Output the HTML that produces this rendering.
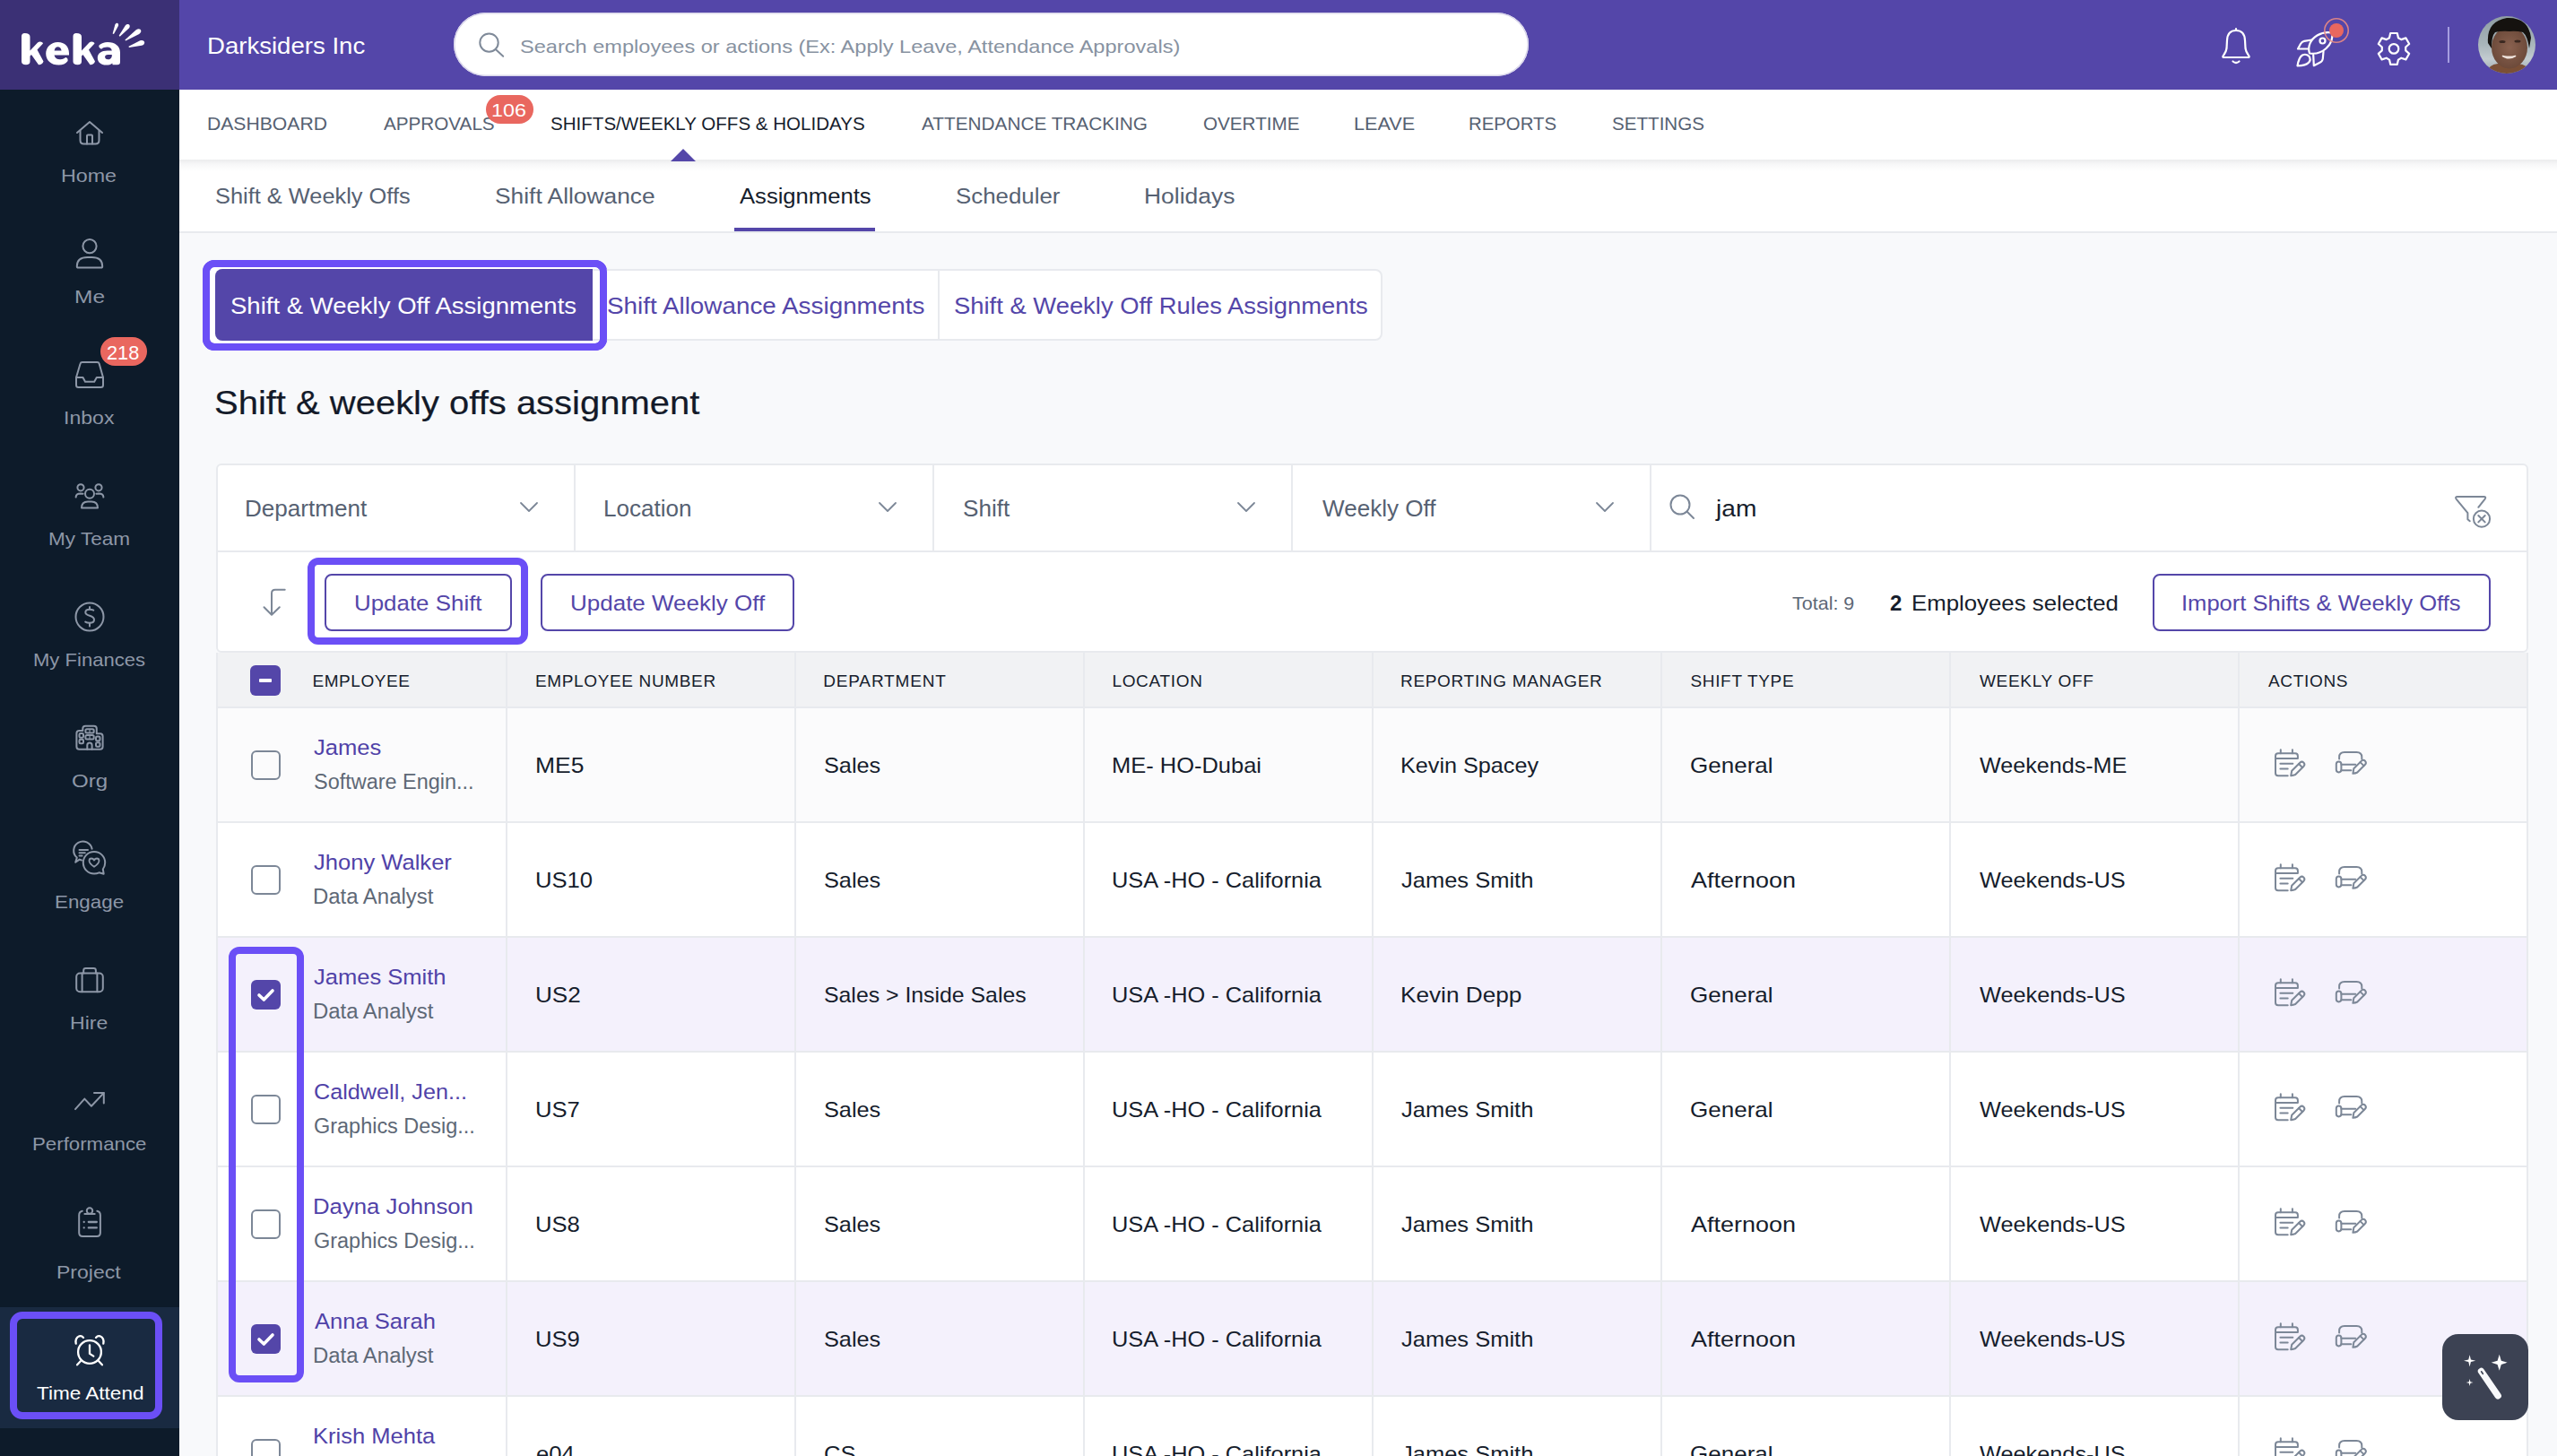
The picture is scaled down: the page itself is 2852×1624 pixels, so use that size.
<!DOCTYPE html>
<html><head><meta charset="utf-8"><title>Keka - Shift & weekly offs assignment</title>
<style>
html,body{margin:0;padding:0;}
body{width:2852px;height:1624px;overflow:hidden;position:relative;background:#f8f9fb;font-family:"Liberation Sans", sans-serif;}
.t{position:absolute;white-space:pre;line-height:1;transform-origin:0 0;}
svg{overflow:visible}
</style></head><body>
<div style="position:absolute;left:0px;top:0px;width:200px;height:1624px;background:#0d1b2a"></div>
<div style="position:absolute;left:200px;top:0px;width:2652px;height:100px;background:#5446a9"></div>
<div style="position:absolute;left:241px;top:517px;width:2579px;height:211px;background:#fff;border:2px solid #e8eaee;border-radius:6px;box-sizing:border-box"></div>
<div style="position:absolute;left:0px;top:0px;width:200px;height:100px;background:#3b3075"></div>
<div style="position:absolute;left:0px;top:1458px;width:200px;height:135px;background:#192a41"></div>
<div style="position:absolute;left:506px;top:14px;width:1199px;height:71px;background:#fff;border-radius:36px;box-shadow:inset 0 0 0 1.5px #d8d5ea"></div>
<div style="position:absolute;left:200px;top:178px;width:2652px;height:80px;background:#fff"></div>
<div style="position:absolute;left:200px;top:258px;width:2652px;height:2px;background:#e8eaee"></div>
<div style="position:absolute;left:226px;top:290px;width:451px;height:101px;border:8px solid #6b4ff6;border-radius:13px;box-sizing:border-box;background:#fff"></div>
<div style="position:absolute;left:240px;top:300px;width:1302px;height:80px;border:2px solid #e8eaee;border-radius:8px;box-sizing:border-box;background:#fff"></div>
<div style="position:absolute;left:241px;top:614px;width:2579px;height:2px;background:#e8eaee"></div>
<div style="position:absolute;left:640px;top:519px;width:2px;height:95px;background:#e8eaee"></div>
<div style="position:absolute;left:1040px;top:519px;width:2px;height:95px;background:#e8eaee"></div>
<div style="position:absolute;left:1440px;top:519px;width:2px;height:95px;background:#e8eaee"></div>
<div style="position:absolute;left:1840px;top:519px;width:2px;height:95px;background:#e8eaee"></div>
<div style="position:absolute;left:241px;top:728px;width:2579px;height:61px;background:#f1f2f4"></div>
<div style="position:absolute;left:241px;top:789px;width:2579px;height:128px;background:#fbfbfc"></div>
<div style="position:absolute;left:241px;top:917px;width:2579px;height:128px;background:#ffffff"></div>
<div style="position:absolute;left:241px;top:1045px;width:2579px;height:128px;background:#f4f1fc"></div>
<div style="position:absolute;left:241px;top:1173px;width:2579px;height:128px;background:#ffffff"></div>
<div style="position:absolute;left:241px;top:1301px;width:2579px;height:128px;background:#ffffff"></div>
<div style="position:absolute;left:241px;top:1429px;width:2579px;height:128px;background:#f4f1fc"></div>
<div style="position:absolute;left:241px;top:1557px;width:2579px;height:128px;background:#ffffff"></div>
<svg style="position:absolute;left:0px;top:0px" width="200" height="100" viewBox="0 0 200 100">
<g fill="#fff">
<path d="M24 40.5 Q24 37 27.5 37 Q33.5 37 33.5 41 L33.5 56.5 L42 47.5 Q44.5 45.5 47.5 47.5 L48 48.5 L41.5 55.5 L48.5 68.5 Q47 72.5 43 72.3 L35 61 L33.5 62.5 L33.5 68.5 Q33.5 72.3 29 72.3 Q24 72.3 24 68.5 Z"/>
<path d="M64.5 47 C72.5 47 77 52 77 59.5 L77 61.5 L60.5 61.5 C61.5 65 64 66.5 67.5 66.3 C70 66.2 72 65 73.2 64 Q76 64.5 75.6 68 C73.5 71 70 72.6 65.5 72.6 C57 72.6 51.2 67.5 51.2 59.8 C51.2 52.5 57 47 64.5 47 Z M60.6 56.5 L68.6 56.5 C68.2 53.8 66.5 52.3 64.5 52.3 C62.5 52.3 61 53.8 60.6 56.5 Z"/>
<path d="M81.5 40.5 Q81.5 37 85 37 Q91 37 91 41 L91 56.5 L99.5 47.5 Q102 45.5 105 47.5 L105.5 48.5 L99 55.5 L106 68.5 Q104.5 72.5 100.5 72.3 L92.5 61 L91 62.5 L91 68.5 Q91 72.3 86.5 72.3 Q81.5 72.3 81.5 68.5 Z"/>
<path d="M120 47 C128.5 47 134 51.5 134 58.5 L134 69 Q134 72.3 131 72.3 L125.6 72.3 L125.3 70.4 C123.5 71.9 121.3 72.6 118.4 72.6 C112.6 72.6 108.8 69.3 108.8 64.5 C108.8 59.5 113 56.4 119.8 56.4 L124.8 56.4 C124.4 54 122.6 52.6 119.6 52.6 C116.8 52.6 114.6 53.5 113 54.8 Q109.5 53 110.5 50.5 C113 48.2 116.2 47 120 47 Z M120.3 61 C118.2 61 117.1 62 117.1 63.6 C117.1 65.2 118.3 66.3 120.4 66.3 C122.8 66.3 124.7 64.8 124.8 62.4 L124.8 61 Z"/>
<path d="M126.95 38.06 L131.86 28.97 C133.20 25.61 129.67 24.21 128.33 27.56 L125.65 37.54 Z"/>
<path d="M133.73 40.65 L143.59 31.82 C146.66 28.20 142.85 24.97 139.78 28.59 L132.67 39.75 Z"/>
<path d="M140.20 45.58 L155.16 37.93 C159.69 34.81 156.40 30.03 151.87 33.16 L139.40 44.42 Z"/>
<path d="M143.91 53.07 L158.03 50.85 C163.27 49.16 161.50 43.64 156.25 45.33 L143.49 51.73 Z"/>
</g></svg>
<div style="position:absolute;left:2730px;top:30px;width:2px;height:40px;background:#a59de0"></div>
<svg style="position:absolute;left:2764px;top:18px" width="64" height="64" viewBox="0 0 64 64"><defs><clipPath id="av"><circle cx="32" cy="32" r="32"/></clipPath>
<linearGradient id="avbg" x1="0" y1="0" x2="0" y2="1"><stop offset="0" stop-color="#8e9ca3"/><stop offset="0.5" stop-color="#a9b6bb"/><stop offset="0.75" stop-color="#c3ccd0"/><stop offset="1" stop-color="#9aa6ab"/></linearGradient>
<radialGradient id="face" cx="0.5" cy="0.5" r="0.55"><stop offset="0" stop-color="#8a6250"/><stop offset="1" stop-color="#6a4838"/></radialGradient></defs>
<g clip-path="url(#av)"><rect width="64" height="64" fill="url(#avbg)"/>
<path d="M8 64 Q12 54 22 53 L44 53 Q56 54 60 64 Z" fill="#7a4f36"/>
<ellipse cx="35" cy="35" rx="20" ry="23.5" fill="url(#face)"/>
<path d="M11 30 Q9 6 32 2 Q56 1 59 24 L57 36 Q55 22 50 18 Q42 16 35 17 Q26 16 19 18 Q15 22 15 36 Z" fill="#15120f"/>
<ellipse cx="27" cy="28.5" rx="3.5" ry="1.5" fill="#3a2820"/><ellipse cx="44" cy="28" rx="3.5" ry="1.5" fill="#3a2820"/>
<path d="M27.5 44.5 Q34.5 49 41.5 44.5 Q34.5 46.3 27.5 44.5 Z" fill="#efe3dc" stroke="#efe3dc" stroke-width="1.6" stroke-linejoin="round"/></g></svg>
<div style="position:absolute;left:200px;top:100px;width:2652px;height:78px;background:#fff"></div>
<div style="position:absolute;left:200px;top:178px;width:2652px;height:13px;background:linear-gradient(rgba(30,35,50,0.085),rgba(30,35,50,0.03) 45%,rgba(30,35,50,0))"></div>
<div style="position:absolute;left:240px;top:300px;width:421px;height:80px;background:#5446a9;border-radius:8px 0 0 8px"></div>
<div style="position:absolute;left:1046px;top:302px;width:2px;height:76px;background:#e8eaee"></div>
<div style="position:absolute;left:362px;top:640px;width:209px;height:64px;border:2px solid #5446a9;border-radius:8px;box-sizing:border-box;background:#fff"></div>
<div style="position:absolute;left:603px;top:640px;width:283px;height:64px;border:2px solid #5446a9;border-radius:8px;box-sizing:border-box;background:#fff"></div>
<div style="position:absolute;left:2401px;top:640px;width:377px;height:64px;border:2px solid #5446a9;border-radius:8px;box-sizing:border-box;background:#fff"></div>
<div style="position:absolute;left:279px;top:742px;width:34px;height:34px;background:#5446a9;border-radius:6px"></div>
<div style="position:absolute;left:241px;top:916px;width:2579px;height:2px;background:#e8eaee"></div>
<div style="position:absolute;left:241px;top:1044px;width:2579px;height:2px;background:#e8eaee"></div>
<div style="position:absolute;left:241px;top:1172px;width:2579px;height:2px;background:#e8eaee"></div>
<div style="position:absolute;left:241px;top:1300px;width:2579px;height:2px;background:#e8eaee"></div>
<div style="position:absolute;left:241px;top:1428px;width:2579px;height:2px;background:#e8eaee"></div>
<div style="position:absolute;left:241px;top:1556px;width:2579px;height:2px;background:#e8eaee"></div>
<div style="position:absolute;left:241px;top:1684px;width:2579px;height:2px;background:#e8eaee"></div>
<div style="position:absolute;left:564px;top:728px;width:2px;height:1000px;background:#e8eaee"></div>
<div style="position:absolute;left:886px;top:728px;width:2px;height:1000px;background:#e8eaee"></div>
<div style="position:absolute;left:1208px;top:728px;width:2px;height:1000px;background:#e8eaee"></div>
<div style="position:absolute;left:1530px;top:728px;width:2px;height:1000px;background:#e8eaee"></div>
<div style="position:absolute;left:1852px;top:728px;width:2px;height:1000px;background:#e8eaee"></div>
<div style="position:absolute;left:2174px;top:728px;width:2px;height:1000px;background:#e8eaee"></div>
<div style="position:absolute;left:2496px;top:728px;width:2px;height:1000px;background:#e8eaee"></div>
<div style="position:absolute;left:241px;top:788px;width:2579px;height:2px;background:#e8eaee"></div>
<div style="position:absolute;left:241px;top:728px;width:2px;height:1000px;background:#e8eaee"></div>
<div style="position:absolute;left:2818px;top:728px;width:2px;height:1000px;background:#e8eaee"></div>
<div style="position:absolute;left:11px;top:1463px;width:170px;height:120px;border:8px solid #6b4ff6;border-radius:14px;box-sizing:border-box"></div>
<div style="position:absolute;left:819px;top:254px;width:157px;height:4px;background:#5446a9"></div>
<div style="position:absolute;left:226px;top:290px;width:451px;height:101px;border:8px solid #6b4ff6;border-radius:13px;box-sizing:border-box"></div>
<div style="position:absolute;left:343px;top:622px;width:246px;height:97px;border:8px solid #6b4ff6;border-radius:12px;box-sizing:border-box"></div>
<div style="position:absolute;left:289px;top:757px;width:14px;height:4px;background:#fff;border-radius:1px"></div>
<div style="position:absolute;left:280px;top:837px;width:33px;height:33px;border:2.5px solid #7c8797;border-radius:6px;box-sizing:border-box"></div>
<div style="position:absolute;left:280px;top:965px;width:33px;height:33px;border:2.5px solid #7c8797;border-radius:6px;box-sizing:border-box"></div>
<div style="position:absolute;left:280px;top:1093px;width:33px;height:33px;background:#5446a9;border-radius:6px"></div>
<div style="position:absolute;left:280px;top:1221px;width:33px;height:33px;border:2.5px solid #7c8797;border-radius:6px;box-sizing:border-box"></div>
<div style="position:absolute;left:280px;top:1349px;width:33px;height:33px;border:2.5px solid #7c8797;border-radius:6px;box-sizing:border-box"></div>
<div style="position:absolute;left:280px;top:1477px;width:33px;height:33px;background:#5446a9;border-radius:6px"></div>
<div style="position:absolute;left:280px;top:1605px;width:33px;height:33px;border:2.5px solid #7c8797;border-radius:6px;box-sizing:border-box"></div>
<div style="position:absolute;left:112px;top:376px;width:52px;height:32px;background:#e9675f;border-radius:16px"></div>
<svg style="position:absolute;left:280px;top:1093px" width="33" height="33" viewBox="0 0 33 33"><path d="M9 17 L14.3 22 L24 12" fill="none" stroke="#fff" stroke-width="3.6" stroke-linecap="round" stroke-linejoin="round"/></svg>
<svg style="position:absolute;left:280px;top:1477px" width="33" height="33" viewBox="0 0 33 33"><path d="M9 17 L14.3 22 L24 12" fill="none" stroke="#fff" stroke-width="3.6" stroke-linecap="round" stroke-linejoin="round"/></svg>
<div class="t" style="left:68.4px;top:185px;font-size:21px;color:#8d97a7;transform:scaleX(1.1075);">Home</div>
<div class="t" style="left:82.5px;top:320px;font-size:21px;color:#8d97a7;transform:scaleX(1.1654);">Me</div>
<div class="t" style="left:70.9px;top:455px;font-size:21px;color:#8d97a7;transform:scaleX(1.098);">Inbox</div>
<div class="t" style="left:54.4px;top:590px;font-size:21px;color:#8d97a7;transform:scaleX(1.0741);">My Team</div>
<div class="t" style="left:37.0px;top:725px;font-size:21px;color:#8d97a7;transform:scaleX(1.05);">My Finances</div>
<div class="t" style="left:80.0px;top:860px;font-size:21px;color:#8d97a7;transform:scaleX(1.1455);">Org</div>
<div class="t" style="left:60.6px;top:995px;font-size:21px;color:#8d97a7;transform:scaleX(1.0657);">Engage</div>
<div class="t" style="left:78.1px;top:1130px;font-size:21px;color:#8d97a7;transform:scaleX(1.0972);">Hire</div>
<div class="t" style="left:35.9px;top:1265px;font-size:21px;color:#8d97a7;transform:scaleX(1.0598);">Performance</div>
<div class="t" style="left:63.3px;top:1408px;font-size:21px;color:#8d97a7;transform:scaleX(1.0952);">Project</div>
<div class="t" style="left:41.0px;top:1543px;font-size:21px;color:#ffffff;transform:scaleX(1.0736);">Time Attend</div>
<div class="t" style="left:230.7px;top:38px;font-size:26px;color:#ffffff;transform:scaleX(1.0604);">Darksiders Inc</div>
<div class="t" style="left:579.9px;top:41px;font-size:21px;color:#8792a1;transform:scaleX(1.1223);">Search employees or actions (Ex: Apply Leave, Attendance Approvals)</div>
<div class="t" style="left:230.8px;top:127px;font-size:21px;color:#566172;transform:scaleX(1.0069);">DASHBOARD</div>
<div class="t" style="left:428.0px;top:127px;font-size:21px;color:#566172;transform:scaleX(0.984);">APPROVALS</div>
<div class="t" style="left:614.3px;top:127px;font-size:21px;color:#161d2c;transform:scaleX(0.9789);">SHIFTS/WEEKLY OFFS &amp; HOLIDAYS</div>
<div class="t" style="left:1028.0px;top:127px;font-size:21px;color:#566172;transform:scaleX(0.9893);">ATTENDANCE TRACKING</div>
<div class="t" style="left:1341.6px;top:127px;font-size:21px;color:#566172;transform:scaleX(0.9832);">OVERTIME</div>
<div class="t" style="left:1509.5px;top:127px;font-size:21px;color:#566172;transform:scaleX(1.0317);">LEAVE</div>
<div class="t" style="left:1638.1px;top:127px;font-size:21px;color:#566172;transform:scaleX(0.9694);">REPORTS</div>
<div class="t" style="left:1798.0px;top:127px;font-size:21px;color:#566172;transform:scaleX(0.9806);">SETTINGS</div>
<div class="t" style="left:239.9px;top:208px;font-size:23.5px;color:#566172;transform:scaleX(1.08);">Shift &amp; Weekly Offs</div>
<div class="t" style="left:551.9px;top:208px;font-size:23.5px;color:#566172;transform:scaleX(1.121);">Shift Allowance</div>
<div class="t" style="left:824.8px;top:208px;font-size:23.5px;color:#161d2c;transform:scaleX(1.0896);">Assignments</div>
<div class="t" style="left:1065.8px;top:208px;font-size:23.5px;color:#566172;transform:scaleX(1.1);">Scheduler</div>
<div class="t" style="left:1276.2px;top:208px;font-size:23.5px;color:#566172;transform:scaleX(1.1253);">Holidays</div>
<div class="t" style="left:257.4px;top:329px;font-size:25.5px;color:#ffffff;transform:scaleX(1.0795);">Shift &amp; Weekly Off Assignments</div>
<div class="t" style="left:676.9px;top:329px;font-size:25.5px;color:#5446a9;transform:scaleX(1.092);">Shift Allowance Assignments</div>
<div class="t" style="left:1063.9px;top:329px;font-size:25.5px;color:#5446a9;transform:scaleX(1.0741);">Shift &amp; Weekly Off Rules Assignments</div>
<div class="t" style="left:239.1px;top:432px;font-size:36.5px;color:#131a29;transform:scaleX(1.0949);-webkit-text-stroke:0.2px #131a29;">Shift &amp; weekly offs assignment</div>
<div class="t" style="left:273.3px;top:555px;font-size:25px;color:#566172;transform:scaleX(1.0434);">Department</div>
<div class="t" style="left:672.9px;top:555px;font-size:25px;color:#566172;transform:scaleX(1.0434);">Location</div>
<div class="t" style="left:1074.0px;top:555px;font-size:25px;color:#566172;transform:scaleX(1.0434);">Shift</div>
<div class="t" style="left:1474.7px;top:555px;font-size:25px;color:#566172;transform:scaleX(1.0434);">Weekly Off</div>
<div class="t" style="left:1914.1px;top:555px;font-size:25px;color:#161d2c;transform:scaleX(1.125);">jam</div>
<div class="t" style="left:394.9px;top:661px;font-size:24.5px;color:#5446a9;transform:scaleX(1.0571);">Update Shift</div>
<div class="t" style="left:635.9px;top:661px;font-size:24.5px;color:#5446a9;transform:scaleX(1.0611);">Update Weekly Off</div>
<div class="t" style="left:1999.4px;top:662px;font-size:21px;color:#5d6776;transform:scaleX(1.0239);">Total: 9</div>
<div class="t" style="left:2108px;top:661px;font-size:24px;color:#161d2c;font-weight:700;">2</div>
<div class="t" style="left:2131.5px;top:661px;font-size:24px;color:#161d2c;transform:scaleX(1.0749);">Employees selected</div>
<div class="t" style="left:2432.9px;top:661px;font-size:24.5px;color:#5446a9;transform:scaleX(1.0432);">Import Shifts &amp; Weekly Offs</div>
<div class="t" style="left:348.5px;top:750px;font-size:19px;color:#161d2c;letter-spacing:0.56px;">EMPLOYEE</div>
<div class="t" style="left:597px;top:750px;font-size:19px;color:#161d2c;letter-spacing:0.64px;">EMPLOYEE NUMBER</div>
<div class="t" style="left:918.2px;top:750px;font-size:19px;color:#161d2c;letter-spacing:0.84px;">DEPARTMENT</div>
<div class="t" style="left:1240.4px;top:750px;font-size:19px;color:#161d2c;letter-spacing:0.68px;">LOCATION</div>
<div class="t" style="left:1562px;top:750px;font-size:19px;color:#161d2c;letter-spacing:0.68px;">REPORTING MANAGER</div>
<div class="t" style="left:1885.4px;top:750px;font-size:19px;color:#161d2c;letter-spacing:0.68px;">SHIFT TYPE</div>
<div class="t" style="left:2208px;top:750px;font-size:19px;color:#161d2c;letter-spacing:0.68px;">WEEKLY OFF</div>
<div class="t" style="left:2530px;top:750px;font-size:19px;color:#161d2c;letter-spacing:0.68px;">ACTIONS</div>
<div class="t" style="left:349.8px;top:822px;font-size:24.5px;color:#5042a8;transform:scaleX(1.0443);">James</div>
<div class="t" style="left:349.8px;top:861px;font-size:23px;color:#5e6876;transform:scaleX(1.0198);">Software Engin...</div>
<div class="t" style="left:596.8px;top:842px;font-size:24px;color:#161d2c;transform:scaleX(1.1022);">ME5</div>
<div class="t" style="left:919.1px;top:842px;font-size:24px;color:#161d2c;transform:scaleX(1.0534);">Sales</div>
<div class="t" style="left:1240.3px;top:842px;font-size:24px;color:#161d2c;transform:scaleX(1.061);">ME- HO-Dubai</div>
<div class="t" style="left:1562.3px;top:842px;font-size:24px;color:#161d2c;transform:scaleX(1.0497);">Kevin Spacey</div>
<div class="t" style="left:1885.1px;top:842px;font-size:24px;color:#161d2c;transform:scaleX(1.0843);">General</div>
<div class="t" style="left:2208.0px;top:842px;font-size:24px;color:#161d2c;transform:scaleX(1.0468);">Weekends-ME</div>
<div class="t" style="left:349.8px;top:950px;font-size:24.5px;color:#5042a8;transform:scaleX(1.0432);">Jhony Walker</div>
<div class="t" style="left:348.7px;top:989px;font-size:23px;color:#5e6876;transform:scaleX(1.0402);">Data Analyst</div>
<div class="t" style="left:596.9px;top:970px;font-size:24px;color:#161d2c;transform:scaleX(1.0674);">US10</div>
<div class="t" style="left:919.1px;top:970px;font-size:24px;color:#161d2c;transform:scaleX(1.0534);">Sales</div>
<div class="t" style="left:1240.3px;top:970px;font-size:24px;color:#161d2c;transform:scaleX(1.0566);">USA -HO - California</div>
<div class="t" style="left:1563.3px;top:970px;font-size:24px;color:#161d2c;transform:scaleX(1.0625);">James Smith</div>
<div class="t" style="left:1886.2px;top:970px;font-size:24px;color:#161d2c;transform:scaleX(1.1233);">Afternoon</div>
<div class="t" style="left:2208.0px;top:970px;font-size:24px;color:#161d2c;transform:scaleX(1.0542);">Weekends-US</div>
<div class="t" style="left:349.8px;top:1078px;font-size:24.5px;color:#5042a8;transform:scaleX(1.042);">James Smith</div>
<div class="t" style="left:348.7px;top:1117px;font-size:23px;color:#5e6876;transform:scaleX(1.0402);">Data Analyst</div>
<div class="t" style="left:596.8px;top:1098px;font-size:24px;color:#161d2c;transform:scaleX(1.0886);">US2</div>
<div class="t" style="left:919.2px;top:1098px;font-size:24px;color:#161d2c;transform:scaleX(1.0343);">Sales &gt; Inside Sales</div>
<div class="t" style="left:1240.3px;top:1098px;font-size:24px;color:#161d2c;transform:scaleX(1.0566);">USA -HO - California</div>
<div class="t" style="left:1562.2px;top:1098px;font-size:24px;color:#161d2c;transform:scaleX(1.0909);">Kevin Depp</div>
<div class="t" style="left:1885.1px;top:1098px;font-size:24px;color:#161d2c;transform:scaleX(1.0843);">General</div>
<div class="t" style="left:2208.0px;top:1098px;font-size:24px;color:#161d2c;transform:scaleX(1.0542);">Weekends-US</div>
<div class="t" style="left:349.8px;top:1206px;font-size:24.5px;color:#5042a8;transform:scaleX(1.0294);">Caldwell, Jen...</div>
<div class="t" style="left:349.8px;top:1245px;font-size:23px;color:#5e6876;transform:scaleX(1.0197);">Graphics Desig...</div>
<div class="t" style="left:596.9px;top:1226px;font-size:24px;color:#161d2c;transform:scaleX(1.0674);">US7</div>
<div class="t" style="left:919.1px;top:1226px;font-size:24px;color:#161d2c;transform:scaleX(1.0534);">Sales</div>
<div class="t" style="left:1240.3px;top:1226px;font-size:24px;color:#161d2c;transform:scaleX(1.0566);">USA -HO - California</div>
<div class="t" style="left:1563.3px;top:1226px;font-size:24px;color:#161d2c;transform:scaleX(1.0625);">James Smith</div>
<div class="t" style="left:1885.1px;top:1226px;font-size:24px;color:#161d2c;transform:scaleX(1.0843);">General</div>
<div class="t" style="left:2208.0px;top:1226px;font-size:24px;color:#161d2c;transform:scaleX(1.0542);">Weekends-US</div>
<div class="t" style="left:348.7px;top:1334px;font-size:24.5px;color:#5042a8;transform:scaleX(1.0509);">Dayna Johnson</div>
<div class="t" style="left:349.8px;top:1373px;font-size:23px;color:#5e6876;transform:scaleX(1.0197);">Graphics Desig...</div>
<div class="t" style="left:596.9px;top:1354px;font-size:24px;color:#161d2c;transform:scaleX(1.0674);">US8</div>
<div class="t" style="left:919.1px;top:1354px;font-size:24px;color:#161d2c;transform:scaleX(1.0534);">Sales</div>
<div class="t" style="left:1240.3px;top:1354px;font-size:24px;color:#161d2c;transform:scaleX(1.0566);">USA -HO - California</div>
<div class="t" style="left:1563.3px;top:1354px;font-size:24px;color:#161d2c;transform:scaleX(1.0625);">James Smith</div>
<div class="t" style="left:1886.2px;top:1354px;font-size:24px;color:#161d2c;transform:scaleX(1.1233);">Afternoon</div>
<div class="t" style="left:2208.0px;top:1354px;font-size:24px;color:#161d2c;transform:scaleX(1.0542);">Weekends-US</div>
<div class="t" style="left:350.8px;top:1462px;font-size:24.5px;color:#5042a8;transform:scaleX(1.042);">Anna Sarah</div>
<div class="t" style="left:348.7px;top:1501px;font-size:23px;color:#5e6876;transform:scaleX(1.0402);">Data Analyst</div>
<div class="t" style="left:596.9px;top:1482px;font-size:24px;color:#161d2c;transform:scaleX(1.0674);">US9</div>
<div class="t" style="left:919.1px;top:1482px;font-size:24px;color:#161d2c;transform:scaleX(1.0534);">Sales</div>
<div class="t" style="left:1240.3px;top:1482px;font-size:24px;color:#161d2c;transform:scaleX(1.0566);">USA -HO - California</div>
<div class="t" style="left:1563.3px;top:1482px;font-size:24px;color:#161d2c;transform:scaleX(1.0625);">James Smith</div>
<div class="t" style="left:1886.2px;top:1482px;font-size:24px;color:#161d2c;transform:scaleX(1.1233);">Afternoon</div>
<div class="t" style="left:2208.0px;top:1482px;font-size:24px;color:#161d2c;transform:scaleX(1.0542);">Weekends-US</div>
<div class="t" style="left:348.7px;top:1590px;font-size:24.5px;color:#5042a8;transform:scaleX(1.042);">Krish Mehta</div>
<div class="t" style="left:349.8px;top:1629px;font-size:23px;color:#5e6876;transform:scaleX(1.03);">Sales Executive</div>
<div class="t" style="left:597.9px;top:1610px;font-size:24px;color:#161d2c;transform:scaleX(1.0674);">e04</div>
<div class="t" style="left:919.1px;top:1610px;font-size:24px;color:#161d2c;transform:scaleX(1.0674);">CS</div>
<div class="t" style="left:1240.3px;top:1610px;font-size:24px;color:#161d2c;transform:scaleX(1.0566);">USA -HO - California</div>
<div class="t" style="left:1563.3px;top:1610px;font-size:24px;color:#161d2c;transform:scaleX(1.0625);">James Smith</div>
<div class="t" style="left:1885.1px;top:1610px;font-size:24px;color:#161d2c;transform:scaleX(1.0843);">General</div>
<div class="t" style="left:2208.0px;top:1610px;font-size:24px;color:#161d2c;transform:scaleX(1.0542);">Weekends-US</div>
<svg style="position:absolute;left:80px;top:130px" width="40" height="36" viewBox="0 0 40 36"><g fill="none" stroke="#8d97a7" stroke-width="2" stroke-linecap="round" stroke-linejoin="round"><path d="M6 18 L20 6 L34 18"/><path d="M9.5 15.5 L9.5 26.5 Q9.5 30.5 13.5 30.5 L26.5 30.5 Q30.5 30.5 30.5 26.5 L30.5 15.5"/><path d="M17 30.5 L17 21.5 Q17 20.5 18 20.5 L22 20.5 Q23 20.5 23 21.5 L23 30.5"/></g></svg>
<svg style="position:absolute;left:80px;top:262px" width="40" height="40" viewBox="0 0 40 40"><g fill="none" stroke="#8d97a7" stroke-width="2" stroke-linecap="round" stroke-linejoin="round"><circle cx="20" cy="12.6" r="7.6"/><path d="M5.8 35 Q5.8 25 17.5 25 L22.5 25 Q34.2 25 34.2 35 Q34.2 36.6 32.8 36.6 L7.2 36.6 Q5.8 36.6 5.8 35 Z"/></g></svg>
<svg style="position:absolute;left:80px;top:400px" width="40" height="40" viewBox="0 0 40 40"><g fill="none" stroke="#8d97a7" stroke-width="2" stroke-linecap="round" stroke-linejoin="round"><path d="M9.6 5.5 Q10 4 11.8 4 L28.4 4 Q30.2 4 30.6 5.5 L35 21 L35 29.5 Q35 32 32.5 32 L7.5 32 Q5 32 5 29.5 L5 21 Z"/><path d="M5 21 L12.5 21 L15 25.7 L25.2 25.7 L27.8 21 L35 21"/></g></svg>
<svg style="position:absolute;left:80px;top:535px" width="40" height="40" viewBox="0 0 40 40"><g fill="none" stroke="#8d97a7" stroke-width="2" stroke-linecap="round" stroke-linejoin="round"><circle cx="10" cy="8.8" r="3.6"/><circle cx="30" cy="8.8" r="3.6"/><circle cx="20" cy="15.8" r="5"/><path d="M11 31.5 Q11 24.5 18 24.5 L22 24.5 Q29 24.5 29 31.5 Z"/><path d="M4.6 19.6 Q4.8 15.6 9.6 15.6 L12.6 15.8"/><path d="M35.4 19.6 Q35.2 15.6 30.4 15.6 L27.4 15.8"/></g></svg>
<svg style="position:absolute;left:80px;top:668px" width="40" height="40" viewBox="0 0 40 40"><g fill="none" stroke="#8d97a7" stroke-width="2" stroke-linecap="round" stroke-linejoin="round"><circle cx="20" cy="20" r="15.5"/><path d="M24.3 12.6 Q22.6 11.7 20 11.7 Q15.3 11.7 15.3 15 Q15.3 17.4 20 18.8 Q25 20.3 25 23.3 Q25 26.8 20 26.8 Q17 26.8 15.2 25.6"/><path d="M20 9 L20 11.5 M20 27 L20 30.5"/></g></svg>
<svg style="position:absolute;left:80px;top:805px" width="40" height="40" viewBox="0 0 40 40"><g fill="none" stroke="#8d97a7" stroke-width="2" stroke-linecap="round" stroke-linejoin="round"><path d="M5.4 13 Q5.4 10 8.4 10 L12.3 10 L12.3 7.7 Q12.3 4.7 15.3 4.7 L24.8 4.7 Q27.8 4.7 27.8 7.7 L27.8 13.3 L31.6 13.3 Q34.6 13.3 34.6 16.3 L34.6 27.8 Q34.6 30.8 31.6 30.8 L8.4 30.8 Q5.4 30.8 5.4 27.8 Z"/><rect x="15.4" y="8.3" width="9.3" height="4.3" rx="1.5"/><rect x="15.4" y="15" width="9.3" height="4.5" rx="1.5"/><path d="M20.05 8.5 L20.05 12.4 M20.05 15.2 L20.05 19.3" stroke-width="1.2"/><rect x="8.5" y="13.1" width="4.5" height="4.7" rx="1.3"/><rect x="8.5" y="19.8" width="4.5" height="4.5" rx="1.3"/><rect x="27" y="16.4" width="4.5" height="4.8" rx="1.3"/><rect x="27" y="23.3" width="4.5" height="4.4" rx="1.3"/><path d="M17.3 30.8 L17.3 26.3 Q17.3 23.6 20 23.6 Q22.6 23.6 22.6 26.3 L22.6 30.8"/></g></svg>
<svg style="position:absolute;left:80px;top:935px" width="40" height="45" viewBox="0 0 40 45"><g fill="none" stroke="#8d97a7" stroke-width="2" stroke-linecap="round" stroke-linejoin="round"><path d="M22.6 11.8 A10.3 10.3 0 1 0 5.8 21.6 L4.2 26.8 L8.7 23.6 L11 24.5"/><path d="M8.5 12.9 L18 12.9 M8.5 16.3 L14.8 16.3 M8.5 19.6 L11.6 19.6"/><path d="M30.5 38.3 Q28 39.5 25 39.5 C18 39.5 12.8 34 12.8 27.3 C12.8 20.5 18 15.1 25 15.1 C32 15.1 37.2 20.5 37.2 27.3 C37.2 30 36.3 32.5 34.8 34.5 L35.7 39.7 Z"/><path d="M25 31.8 C21.5 29.5 19.5 27 19.5 25 C19.5 23.3 20.6 22.5 22 22.5 C23.4 22.5 24.4 23.3 25 24.5 C25.6 23.3 26.6 22.5 28 22.5 C29.4 22.5 30.5 23.3 30.5 25 C30.5 27 28.5 29.5 25 31.8 Z" stroke-width="1.8"/></g></svg>
<svg style="position:absolute;left:80px;top:1075px" width="40" height="40" viewBox="0 0 40 40"><g fill="none" stroke="#8d97a7" stroke-width="2" stroke-linecap="round" stroke-linejoin="round"><rect x="5.2" y="10.6" width="29.6" height="20.6" rx="4"/><path d="M11.6 10.6 L11.6 31.2 M28.4 10.6 L28.4 31.2"/><path d="M13.2 10.6 L13.2 7.5 Q13.2 5.1 15.6 5.1 L24.5 5.1 Q26.9 5.1 26.9 7.5 L26.9 10.6"/></g></svg>
<svg style="position:absolute;left:80px;top:1215px" width="40" height="30" viewBox="0 0 40 30"><g fill="none" stroke="#8d97a7" stroke-width="2" stroke-linecap="round" stroke-linejoin="round"><path d="M4 22.1 L14.3 10.6 L21.9 18.7 L35.7 4.1"/><path d="M25 3.9 L35.8 3.9 L35.8 15.4"/></g></svg>
<svg style="position:absolute;left:80px;top:1343px" width="40" height="40" viewBox="0 0 40 40"><g fill="none" stroke="#8d97a7" stroke-width="2" stroke-linecap="round" stroke-linejoin="round"><path d="M11.8 7.8 Q8.2 8.5 8.2 12.3 L8.2 32 Q8.2 36 12.2 36 L27.9 36 Q31.9 36 31.9 32 L31.9 12.3 Q31.9 8.5 28.3 7.8"/><circle cx="20" cy="7.5" r="3.2"/><path d="M14.4 10.9 L25.7 10.9"/><path d="M13.7 20 L13.7 20 M18.8 20 L27.8 20 M13.7 26.4 L13.7 26.4 M18.8 26.4 L27.8 26.4" stroke-width="2.3"/></g></svg>
<svg style="position:absolute;left:80px;top:1485px" width="40" height="40" viewBox="0 0 40 40"><g fill="none" stroke="#fff" stroke-width="2.3" stroke-linecap="round" stroke-linejoin="round"><circle cx="20" cy="23" r="12.9"/><path d="M20 15.3 L20 24.9 L24.3 27.6"/><path d="M4.7 13.6 Q3.5 7.5 8.5 5.3 Q11 4.5 13 6.9"/><path d="M35.3 13.6 Q36.5 7.5 31.5 5.3 Q29 4.5 27 6.9"/><path d="M9.8 33.3 L6.1 37.3 M30.2 33.3 L33.9 37.3"/></g></svg>
<svg style="position:absolute;left:530px;top:32px" width="36" height="36" viewBox="0 0 36 36"><g fill="none" stroke="#7f8a99" stroke-width="2" stroke-linecap="round"><circle cx="15.5" cy="15.6" r="10.2"/><path d="M23 23.2 L31.2 30.8"/></g></svg>
<svg style="position:absolute;left:2470px;top:28px" width="48" height="48" viewBox="0 0 48 48"><g fill="none" stroke="#fff" stroke-width="2.2" stroke-linecap="round" stroke-linejoin="round"><path d="M24 4 L24 6"/><path d="M24 6 Q14.5 6 14 17 L13.5 26 Q13 29.5 10.5 33 L9.5 34.5 Q8.8 36 10.5 36 L37.5 36 Q39.2 36 38.5 34.5 L37.5 33 Q35 29.5 34.5 26 L34 17 Q33.5 6 24 6 Z"/><path d="M20.5 40.5 Q24 43.5 27.5 40.5"/></g></svg>
<svg style="position:absolute;left:2555px;top:26px" width="60" height="52" viewBox="0 0 60 52"><g fill="none" stroke="#fff" stroke-width="2.2" stroke-linecap="round" stroke-linejoin="round"><path d="M21 33.5 C18.5 26 22 18 29.5 13.5 C35 10.2 41 9.5 46 10.5 C47 15.5 45.5 22.5 39.5 28 C34.5 32.5 28 34.5 21 33.5 Z"/><circle cx="35.5" cy="19.5" r="3"/><path d="M23.5 18.5 L15 19.8 Q12.5 20.3 11 23 L8 28.5 L19.8 28.5"/><path d="M36.5 31.5 L35.8 39.5 Q35.5 42.3 32.5 43.8 L25.8 47.2 L25.2 35.2"/><path d="M20.5 36.8 Q17 33.5 13 35.5 Q9 38 7.5 47.5 Q17 47.2 20 43.8 Q23 40.5 20.5 36.8 Z"/></g></svg>
<svg style="position:absolute;left:2648px;top:32px" width="44" height="44" viewBox="0 0 44 44"><g fill="none" stroke="#fff" stroke-width="2.2" stroke-linecap="round" stroke-linejoin="round"><path d="M18.2 5 L25.8 5 L27 10.2 L30.3 12.1 L35.4 10.4 L39.2 17 L35.2 20.5 L35.2 24.3 L39.2 27.8 L35.4 34.4 L30.3 32.7 L27 34.6 L25.8 39.8 L18.2 39.8 L17 34.6 L13.7 32.7 L8.6 34.4 L4.8 27.8 L8.8 24.3 L8.8 20.5 L4.8 17 L8.6 10.4 L13.7 12.1 L17 10.2 Z"/><circle cx="22" cy="22.4" r="5.3"/></g></svg>
<div style="position:absolute;left:542px;top:106px;width:53px;height:32px;background:#e9675f;border-radius:16px"></div>
<svg style="position:absolute;left:748px;top:165px" width="28" height="15" viewBox="0 0 28 15"><path d="M0 15 L14 1 L28 15 Z" fill="#5446a9"/></svg>
<svg style="position:absolute;left:579px;top:558px" width="24" height="16" viewBox="0 0 24 16"><path d="M2 3 L11 12 L20 3" fill="none" stroke="#7c8797" stroke-width="1.8" stroke-linecap="round" stroke-linejoin="round"/></svg>
<svg style="position:absolute;left:979px;top:558px" width="24" height="16" viewBox="0 0 24 16"><path d="M2 3 L11 12 L20 3" fill="none" stroke="#7c8797" stroke-width="1.8" stroke-linecap="round" stroke-linejoin="round"/></svg>
<svg style="position:absolute;left:1379px;top:558px" width="24" height="16" viewBox="0 0 24 16"><path d="M2 3 L11 12 L20 3" fill="none" stroke="#7c8797" stroke-width="1.8" stroke-linecap="round" stroke-linejoin="round"/></svg>
<svg style="position:absolute;left:1779px;top:558px" width="24" height="16" viewBox="0 0 24 16"><path d="M2 3 L11 12 L20 3" fill="none" stroke="#7c8797" stroke-width="1.8" stroke-linecap="round" stroke-linejoin="round"/></svg>
<svg style="position:absolute;left:1858px;top:548px" width="36" height="36" viewBox="0 0 36 36"><g fill="none" stroke="#7c8797" stroke-width="2" stroke-linecap="round"><circle cx="16" cy="15" r="10.5"/><path d="M23.5 22.5 L31 30"/></g></svg>
<svg style="position:absolute;left:2732px;top:548px" width="52" height="45" viewBox="0 0 52 45"><g fill="none" stroke="#7c8797" stroke-width="2" stroke-linecap="round" stroke-linejoin="round"><path d="M22.8 33.2 L20.4 31.2 L20.4 24.2 L7.6 8.6 Q6 6 9 6 L38.4 6 Q41.4 6 39.6 8.6 L32.3 17.8"/><circle cx="36" cy="30.7" r="9.1"/><path d="M32.3 27 L39.7 34.4 M39.7 27 L32.3 34.4"/></g></svg>
<svg style="position:absolute;left:285px;top:650px" width="40" height="42" viewBox="0 0 40 42"><g fill="none" stroke="#7c8797" stroke-width="2" stroke-linecap="round" stroke-linejoin="round"><path d="M32.7 7.8 L22 7.8 Q18 7.8 18 11.8 L18 35"/><path d="M9.5 27.3 L18 35.8 L26.8 27.3"/></g></svg>
<svg style="position:absolute;left:2530px;top:831px" width="48" height="40" viewBox="0 0 48 40"><g fill="none" stroke="#7c8797" stroke-width="2" stroke-linecap="round" stroke-linejoin="round">
<path d="M21.7 34.2 L11 34.2 Q8 34.2 8 31.2 L8 12.3 Q8 9.3 11 9.3 L29.9 9.3 Q32.9 9.3 32.9 12.3 L32.9 15.1 L8 15.1"/>
<path d="M13.8 5.3 L13.8 9.3 M26.9 5.3 L26.9 9.3"/><path d="M13.4 20.7 L27.3 20.7 M13.4 26.4 L21.7 26.4"/>
<path d="M25.2 34.2 L26.2 28.8 L35.5 19.5 Q37.5 17.7 39.5 19.7 Q41.3 21.7 39.5 23.7 L30.2 33 Q28 34 25.2 34.2 Z"/><path d="M34 21 L38 25"/></g></svg>
<svg style="position:absolute;left:2598px;top:831px" width="48" height="40" viewBox="0 0 48 40"><g fill="none" stroke="#7c8797" stroke-width="2" stroke-linecap="round" stroke-linejoin="round">
<path d="M11.1 15.4 L11.1 13.5 Q11.1 8 17 8 L30.5 8 Q36.3 8 36.3 13.5 L36.3 15.4"/>
<rect x="7.8" y="18.4" width="5.6" height="12" rx="2.8"/><path d="M13.4 21.7 L29.2 21.7 M13.4 28.3 L24.4 28.3"/>
<path d="M26.4 31.8 L27.3 26.3 L36 17.6 Q38 15.8 40 17.8 Q41.8 19.8 40 21.8 L31.3 30.5 Q29.2 31.5 26.4 31.8 Z"/><path d="M34.5 19.1 L38.5 23.1"/></g></svg>
<svg style="position:absolute;left:2530px;top:959px" width="48" height="40" viewBox="0 0 48 40"><g fill="none" stroke="#7c8797" stroke-width="2" stroke-linecap="round" stroke-linejoin="round">
<path d="M21.7 34.2 L11 34.2 Q8 34.2 8 31.2 L8 12.3 Q8 9.3 11 9.3 L29.9 9.3 Q32.9 9.3 32.9 12.3 L32.9 15.1 L8 15.1"/>
<path d="M13.8 5.3 L13.8 9.3 M26.9 5.3 L26.9 9.3"/><path d="M13.4 20.7 L27.3 20.7 M13.4 26.4 L21.7 26.4"/>
<path d="M25.2 34.2 L26.2 28.8 L35.5 19.5 Q37.5 17.7 39.5 19.7 Q41.3 21.7 39.5 23.7 L30.2 33 Q28 34 25.2 34.2 Z"/><path d="M34 21 L38 25"/></g></svg>
<svg style="position:absolute;left:2598px;top:959px" width="48" height="40" viewBox="0 0 48 40"><g fill="none" stroke="#7c8797" stroke-width="2" stroke-linecap="round" stroke-linejoin="round">
<path d="M11.1 15.4 L11.1 13.5 Q11.1 8 17 8 L30.5 8 Q36.3 8 36.3 13.5 L36.3 15.4"/>
<rect x="7.8" y="18.4" width="5.6" height="12" rx="2.8"/><path d="M13.4 21.7 L29.2 21.7 M13.4 28.3 L24.4 28.3"/>
<path d="M26.4 31.8 L27.3 26.3 L36 17.6 Q38 15.8 40 17.8 Q41.8 19.8 40 21.8 L31.3 30.5 Q29.2 31.5 26.4 31.8 Z"/><path d="M34.5 19.1 L38.5 23.1"/></g></svg>
<svg style="position:absolute;left:2530px;top:1087px" width="48" height="40" viewBox="0 0 48 40"><g fill="none" stroke="#7c8797" stroke-width="2" stroke-linecap="round" stroke-linejoin="round">
<path d="M21.7 34.2 L11 34.2 Q8 34.2 8 31.2 L8 12.3 Q8 9.3 11 9.3 L29.9 9.3 Q32.9 9.3 32.9 12.3 L32.9 15.1 L8 15.1"/>
<path d="M13.8 5.3 L13.8 9.3 M26.9 5.3 L26.9 9.3"/><path d="M13.4 20.7 L27.3 20.7 M13.4 26.4 L21.7 26.4"/>
<path d="M25.2 34.2 L26.2 28.8 L35.5 19.5 Q37.5 17.7 39.5 19.7 Q41.3 21.7 39.5 23.7 L30.2 33 Q28 34 25.2 34.2 Z"/><path d="M34 21 L38 25"/></g></svg>
<svg style="position:absolute;left:2598px;top:1087px" width="48" height="40" viewBox="0 0 48 40"><g fill="none" stroke="#7c8797" stroke-width="2" stroke-linecap="round" stroke-linejoin="round">
<path d="M11.1 15.4 L11.1 13.5 Q11.1 8 17 8 L30.5 8 Q36.3 8 36.3 13.5 L36.3 15.4"/>
<rect x="7.8" y="18.4" width="5.6" height="12" rx="2.8"/><path d="M13.4 21.7 L29.2 21.7 M13.4 28.3 L24.4 28.3"/>
<path d="M26.4 31.8 L27.3 26.3 L36 17.6 Q38 15.8 40 17.8 Q41.8 19.8 40 21.8 L31.3 30.5 Q29.2 31.5 26.4 31.8 Z"/><path d="M34.5 19.1 L38.5 23.1"/></g></svg>
<svg style="position:absolute;left:2530px;top:1215px" width="48" height="40" viewBox="0 0 48 40"><g fill="none" stroke="#7c8797" stroke-width="2" stroke-linecap="round" stroke-linejoin="round">
<path d="M21.7 34.2 L11 34.2 Q8 34.2 8 31.2 L8 12.3 Q8 9.3 11 9.3 L29.9 9.3 Q32.9 9.3 32.9 12.3 L32.9 15.1 L8 15.1"/>
<path d="M13.8 5.3 L13.8 9.3 M26.9 5.3 L26.9 9.3"/><path d="M13.4 20.7 L27.3 20.7 M13.4 26.4 L21.7 26.4"/>
<path d="M25.2 34.2 L26.2 28.8 L35.5 19.5 Q37.5 17.7 39.5 19.7 Q41.3 21.7 39.5 23.7 L30.2 33 Q28 34 25.2 34.2 Z"/><path d="M34 21 L38 25"/></g></svg>
<svg style="position:absolute;left:2598px;top:1215px" width="48" height="40" viewBox="0 0 48 40"><g fill="none" stroke="#7c8797" stroke-width="2" stroke-linecap="round" stroke-linejoin="round">
<path d="M11.1 15.4 L11.1 13.5 Q11.1 8 17 8 L30.5 8 Q36.3 8 36.3 13.5 L36.3 15.4"/>
<rect x="7.8" y="18.4" width="5.6" height="12" rx="2.8"/><path d="M13.4 21.7 L29.2 21.7 M13.4 28.3 L24.4 28.3"/>
<path d="M26.4 31.8 L27.3 26.3 L36 17.6 Q38 15.8 40 17.8 Q41.8 19.8 40 21.8 L31.3 30.5 Q29.2 31.5 26.4 31.8 Z"/><path d="M34.5 19.1 L38.5 23.1"/></g></svg>
<svg style="position:absolute;left:2530px;top:1343px" width="48" height="40" viewBox="0 0 48 40"><g fill="none" stroke="#7c8797" stroke-width="2" stroke-linecap="round" stroke-linejoin="round">
<path d="M21.7 34.2 L11 34.2 Q8 34.2 8 31.2 L8 12.3 Q8 9.3 11 9.3 L29.9 9.3 Q32.9 9.3 32.9 12.3 L32.9 15.1 L8 15.1"/>
<path d="M13.8 5.3 L13.8 9.3 M26.9 5.3 L26.9 9.3"/><path d="M13.4 20.7 L27.3 20.7 M13.4 26.4 L21.7 26.4"/>
<path d="M25.2 34.2 L26.2 28.8 L35.5 19.5 Q37.5 17.7 39.5 19.7 Q41.3 21.7 39.5 23.7 L30.2 33 Q28 34 25.2 34.2 Z"/><path d="M34 21 L38 25"/></g></svg>
<svg style="position:absolute;left:2598px;top:1343px" width="48" height="40" viewBox="0 0 48 40"><g fill="none" stroke="#7c8797" stroke-width="2" stroke-linecap="round" stroke-linejoin="round">
<path d="M11.1 15.4 L11.1 13.5 Q11.1 8 17 8 L30.5 8 Q36.3 8 36.3 13.5 L36.3 15.4"/>
<rect x="7.8" y="18.4" width="5.6" height="12" rx="2.8"/><path d="M13.4 21.7 L29.2 21.7 M13.4 28.3 L24.4 28.3"/>
<path d="M26.4 31.8 L27.3 26.3 L36 17.6 Q38 15.8 40 17.8 Q41.8 19.8 40 21.8 L31.3 30.5 Q29.2 31.5 26.4 31.8 Z"/><path d="M34.5 19.1 L38.5 23.1"/></g></svg>
<svg style="position:absolute;left:2530px;top:1471px" width="48" height="40" viewBox="0 0 48 40"><g fill="none" stroke="#7c8797" stroke-width="2" stroke-linecap="round" stroke-linejoin="round">
<path d="M21.7 34.2 L11 34.2 Q8 34.2 8 31.2 L8 12.3 Q8 9.3 11 9.3 L29.9 9.3 Q32.9 9.3 32.9 12.3 L32.9 15.1 L8 15.1"/>
<path d="M13.8 5.3 L13.8 9.3 M26.9 5.3 L26.9 9.3"/><path d="M13.4 20.7 L27.3 20.7 M13.4 26.4 L21.7 26.4"/>
<path d="M25.2 34.2 L26.2 28.8 L35.5 19.5 Q37.5 17.7 39.5 19.7 Q41.3 21.7 39.5 23.7 L30.2 33 Q28 34 25.2 34.2 Z"/><path d="M34 21 L38 25"/></g></svg>
<svg style="position:absolute;left:2598px;top:1471px" width="48" height="40" viewBox="0 0 48 40"><g fill="none" stroke="#7c8797" stroke-width="2" stroke-linecap="round" stroke-linejoin="round">
<path d="M11.1 15.4 L11.1 13.5 Q11.1 8 17 8 L30.5 8 Q36.3 8 36.3 13.5 L36.3 15.4"/>
<rect x="7.8" y="18.4" width="5.6" height="12" rx="2.8"/><path d="M13.4 21.7 L29.2 21.7 M13.4 28.3 L24.4 28.3"/>
<path d="M26.4 31.8 L27.3 26.3 L36 17.6 Q38 15.8 40 17.8 Q41.8 19.8 40 21.8 L31.3 30.5 Q29.2 31.5 26.4 31.8 Z"/><path d="M34.5 19.1 L38.5 23.1"/></g></svg>
<svg style="position:absolute;left:2530px;top:1599px" width="48" height="40" viewBox="0 0 48 40"><g fill="none" stroke="#7c8797" stroke-width="2" stroke-linecap="round" stroke-linejoin="round">
<path d="M21.7 34.2 L11 34.2 Q8 34.2 8 31.2 L8 12.3 Q8 9.3 11 9.3 L29.9 9.3 Q32.9 9.3 32.9 12.3 L32.9 15.1 L8 15.1"/>
<path d="M13.8 5.3 L13.8 9.3 M26.9 5.3 L26.9 9.3"/><path d="M13.4 20.7 L27.3 20.7 M13.4 26.4 L21.7 26.4"/>
<path d="M25.2 34.2 L26.2 28.8 L35.5 19.5 Q37.5 17.7 39.5 19.7 Q41.3 21.7 39.5 23.7 L30.2 33 Q28 34 25.2 34.2 Z"/><path d="M34 21 L38 25"/></g></svg>
<svg style="position:absolute;left:2598px;top:1599px" width="48" height="40" viewBox="0 0 48 40"><g fill="none" stroke="#7c8797" stroke-width="2" stroke-linecap="round" stroke-linejoin="round">
<path d="M11.1 15.4 L11.1 13.5 Q11.1 8 17 8 L30.5 8 Q36.3 8 36.3 13.5 L36.3 15.4"/>
<rect x="7.8" y="18.4" width="5.6" height="12" rx="2.8"/><path d="M13.4 21.7 L29.2 21.7 M13.4 28.3 L24.4 28.3"/>
<path d="M26.4 31.8 L27.3 26.3 L36 17.6 Q38 15.8 40 17.8 Q41.8 19.8 40 21.8 L31.3 30.5 Q29.2 31.5 26.4 31.8 Z"/><path d="M34.5 19.1 L38.5 23.1"/></g></svg>
<div class="t" style="left:119.4px;top:383px;font-size:22px;color:#ffffff;transform:scaleX(0.9886);">218</div>
<svg style="position:absolute;left:2585px;top:12px" width="44" height="44" viewBox="0 0 44 44"><circle cx="21" cy="22" r="13.2" fill="none" stroke="#e98a83" stroke-width="1.6" opacity="0.9"/><circle cx="21" cy="22" r="8" fill="#e9675f"/></svg>
<div class="t" style="left:548.3px;top:112px;font-size:21px;color:#ffffff;transform:scaleX(1.1094);">106</div>
<div style="position:absolute;left:255px;top:1056px;width:84px;height:486px;border:8px solid #6b4ff6;border-radius:12px;box-sizing:border-box"></div>
<div style="position:absolute;left:2724px;top:1488px;width:96px;height:96px;background:#3c4253;border-radius:18px"></div>
<svg style="position:absolute;left:2724px;top:1488px" width="96" height="96" viewBox="0 0 96 96"><g fill="#fff">
<path d="M30.6 23.2 L31.9 28.5 L37.2 29.8 L31.9 31.1 L30.6 36.4 L29.3 31.1 L24 29.8 L29.3 28.5 Z"/>
<path d="M63.7 22.8 L65.8 29.7 L72.7 31.8 L65.8 33.9 L63.7 40.8 L61.6 33.9 L54.7 31.8 L61.6 29.7 Z"/>
<path d="M30.6 50 L31.4 53.2 L34.6 54 L31.4 54.8 L30.6 58 L29.8 54.8 L26.6 54 L29.8 53.2 Z"/>
</g><path d="M43.5 41.5 L62.2 68.8" stroke="#f8f9fb" stroke-width="7.4" stroke-linecap="round"/><path d="M43.6 41.8 L45.3 44.3" stroke="#3c4253" stroke-width="1.6" stroke-linecap="round"/></svg>
</body></html>
